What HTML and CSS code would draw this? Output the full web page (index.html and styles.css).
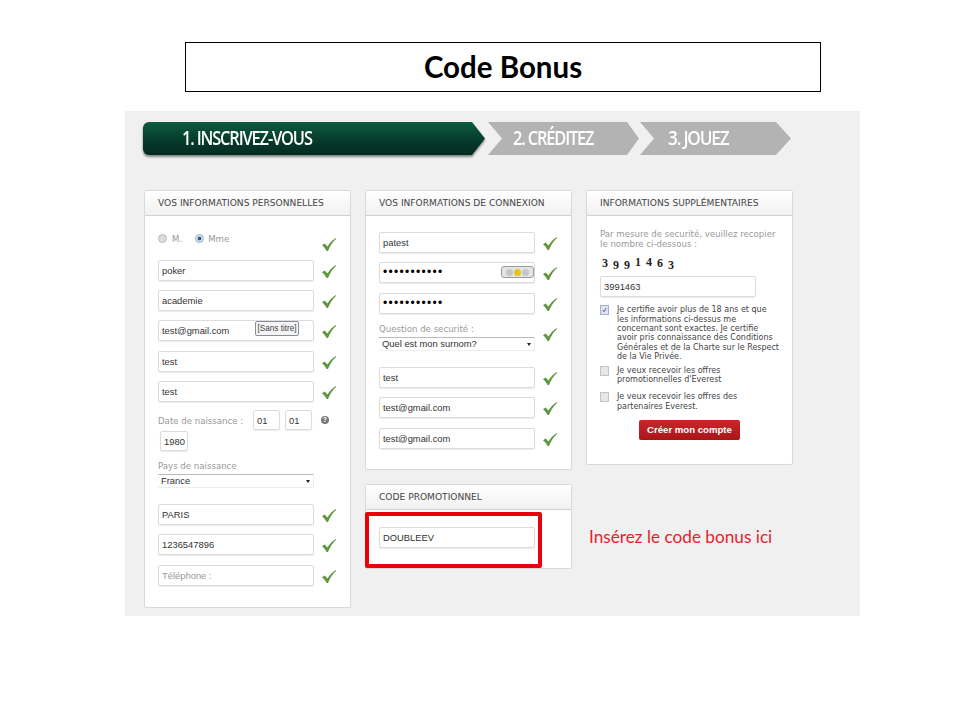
FILE: index.html
```html
<!DOCTYPE html>
<html lang="fr">
<head>
  <meta charset="UTF-8" />
  <title>Code Bonus</title>
  <link rel="stylesheet" href="styles.css">
</head>
<body>
  <svg class="defs" width="0" height="0">
    <symbol id="tick" viewBox="0 0 14 13">
      <path d="M0 7.2 L2.6 5.4 C3.6 6.2 4.6 7.4 5.4 8.6 C7.4 5.2 10.2 2.2 14 0 L14 .9 C10.8 3.8 8.2 7.6 6 13 L4.6 13 C3.6 10.8 2 8.8 0 7.2 Z" fill="#5f9640"/>
    </symbol>
  </svg>

  <h1 class="title">Code Bonus</h1>

  <div class="shot">
    <div class="steps">
      <div class="step-shadow">
        <div class="step step-first"><span>1. INSCRIVEZ-VOUS</span></div>
      </div>
      <div class="step step-second"><span>2. CRÉDITEZ</span></div>
      <div class="step step-third"><span>3. JOUEZ</span></div>
    </div>

    <div class="columns">
      <div class="col">
        <div class="card">
          <div class="card-head">VOS INFORMATIONS PERSONNELLES</div>
          <div class="card-body body-perso">
            <div class="row row-radio">
              <div class="radios">
                <span class="radio"></span><span class="radio-label">M.</span>
                <span class="radio radio-on"></span><span class="radio-label">Mme</span>
              </div>
              <svg class="tick tick-low"><use href="#tick"/></svg>
            </div>
            <div class="row"><div class="field">poker</div><svg class="tick"><use href="#tick"/></svg></div>
            <div class="row"><div class="field">academie</div><svg class="tick"><use href="#tick"/></svg></div>
            <div class="row">
              <div class="field">test@gmail.com<span class="tooltip">[Sans titre]</span></div>
              <svg class="tick"><use href="#tick"/></svg>
            </div>
            <div class="row"><div class="field">test</div><svg class="tick"><use href="#tick"/></svg></div>
            <div class="row"><div class="field">test</div><svg class="tick"><use href="#tick"/></svg></div>

            <div class="date-row">
              <span class="label date-label">Date de naissance :</span>
              <div class="field field-small">01</div>
              <div class="field field-small">01</div>
              <span class="help">?</span>
              <div class="field field-year">1980</div>
            </div>

            <div class="label country-label">Pays de naissance</div>
            <div class="select select-country">France<span class="caret"></span></div>

            <div class="row"><div class="field">PARIS</div><svg class="tick"><use href="#tick"/></svg></div>
            <div class="row"><div class="field">1236547896</div><svg class="tick"><use href="#tick"/></svg></div>
            <div class="row"><div class="field field-empty">Téléphone :</div><svg class="tick"><use href="#tick"/></svg></div>
          </div>
        </div>
      </div>

      <div class="col">
        <div class="card">
          <div class="card-head">VOS INFORMATIONS DE CONNEXION</div>
          <div class="card-body body-login">
            <div class="row"><div class="field">patest</div><svg class="tick"><use href="#tick"/></svg></div>
            <div class="row">
              <div class="field field-pass">•••••••••••
                <span class="meter"><i></i><i class="lit"></i><i></i></span>
              </div>
              <svg class="tick"><use href="#tick"/></svg>
            </div>
            <div class="row"><div class="field field-pass">•••••••••••</div><svg class="tick"><use href="#tick"/></svg></div>
            <div class="row row-question">
              <div>
                <div class="label question-label">Question de securité :</div>
                <div class="select">Quel est mon surnom?<span class="caret"></span></div>
              </div>
              <svg class="tick tick-high"><use href="#tick"/></svg>
            </div>
            <div class="row"><div class="field">test</div><svg class="tick"><use href="#tick"/></svg></div>
            <div class="row"><div class="field">test@gmail.com</div><svg class="tick"><use href="#tick"/></svg></div>
            <div class="row"><div class="field">test@gmail.com</div><svg class="tick"><use href="#tick"/></svg></div>
          </div>
        </div>

        <div class="card card-promo">
          <div class="card-head">CODE PROMOTIONNEL</div>
          <div class="card-body body-promo">
            <div class="row"><div class="field">DOUBLEEV</div></div>
          </div>
          <div class="redbox"></div>
        </div>
      </div>

      <div class="col">
        <div class="card">
          <div class="card-head">INFORMATIONS SUPPLÉMENTAIRES</div>
          <div class="card-body body-extra">
            <p class="label intro">Par mesure de securité, veuillez recopier le nombre ci-dessous :</p>
            <div class="captcha"><span>3</span><span>9</span><span>9</span><span>1</span><span>4</span><span>6</span><span>3</span></div>
            <div class="field">3991463</div>

            <div class="agree agree-first">
              <span class="box box-on"><svg viewBox="0 0 10 10"><path d="M2.5 5 L4.3 7.5 L7.5 2.2" fill="none" stroke="#3b4f8c" stroke-width="1.2"/></svg></span>
              <p>Je certifie avoir plus de 18 ans et que<br>les informations ci-dessus me<br>concernant sont exactes. Je certifie<br>avoir pris connaissance des Conditions<br>Générales et de la Charte sur le Respect<br>de la Vie Privée.</p>
            </div>
            <div class="agree agree-second">
              <span class="box"></span>
              <p>Je veux recevoir les offres<br>promotionnelles d'Everest</p>
            </div>
            <div class="agree">
              <span class="box"></span>
              <p>Je veux recevoir les offres des<br>partenaires Everest.</p>
            </div>
            <div class="button">Créer mon compte</div>
          </div>
        </div>
        <p class="note">Insérez le code bonus ici</p>
      </div>
    </div>
  </div>
</body>
</html>
```

FILE: styles.css
```css
* {
  margin: 0;
  padding: 0;
  box-sizing: border-box;
}

body {
  background: #fff;
  font-family: 'Liberation Sans', Arial, sans-serif;
  color: #333;
  padding-top: 42px;
}

.defs {
  display: block;
  height: 0;
}

/* Titre */
.title {
  width: 636px;
  height: 50px;
  margin: 0 0 19px 185px;
  border: 1px solid #000;
  font-family: Lato, sans-serif;
  font-size: 29.5px;
  font-weight: 700;
  line-height: 48px;
  text-align: center;
  color: #000;
}

/* Capture */
.shot {
  width: 735px;
  height: 505px;
  margin-left: 125px;
  padding: 11px 0 0 18px;
  background: #f0f0f0;
}

.steps {
  display: flex;
  height: 34px;
  margin-bottom: 34px;
}

.step {
  height: 33px;
  font-family: 'Open Sans', sans-serif;
  font-size: 20px;
  font-weight: 600;
  letter-spacing: -1.4px;
  line-height: 32px;
  color: #fff;
  background: #b3b3b3;
}

/* police condensee de la capture */
.step span {
  display: inline-block;
  transform: scaleX(0.82);
  transform-origin: left center;
}

.step-third span {
  transform: scaleX(0.86);
}

.step-shadow {
  filter: drop-shadow(0 2px 1px rgba(0, 0, 0, 0.45));
  margin-right: 3px;
}

.step-first {
  width: 342px;
  height: 33px;
  padding-left: 39px;
  border-radius: 6px 0 0 6px;
  background: linear-gradient(#0c5c3f, #06392a 60%, #042c20);
  clip-path: polygon(0 0, 329px 0, 342px 50%, 329px 100%, 0 100%);
}

.step-second {
  width: 151px;
  margin-right: 1px;
  padding-left: 25px;
  clip-path: polygon(0 0, 139px 0, 151px 50%, 139px 100%, 0 100%, 14px 50%);
}

.step-third {
  width: 151px;
  padding-left: 28px;
  clip-path: polygon(0 0, 136px 0, 151px 50%, 136px 100%, 0 100%, 14px 50%);
}

.columns {
  display: flex;
  gap: 14px;
  margin-left: 1px;
}

.col {
  width: 207px;
}

/* Cartes */
.card {
  position: relative;
  background: #fff;
  border: 1px solid #d9d9d9;
  border-radius: 2px;
}

.card-promo {
  margin-top: 14px;
}

.card-head {
  height: 25px;
  padding-left: 13px;
  border-bottom: 1px solid #d0d0d0;
  background: linear-gradient(#fff, #f1f1f1);
  font-family: 'DejaVu Sans', Verdana, sans-serif;
  font-size: 9.1px;
  line-height: 24px;
  color: #444;
}

.card-body {
  padding: 16px 13px 12px;
}

.body-perso {
  padding-top: 18px;
}

.body-login {
  padding-bottom: 11px;
}

.body-promo {
  padding-top: 17px;
  padding-bottom: 11px;
}

.body-extra {
  padding-top: 14px;
  padding-bottom: 24px;
}

/* Lignes */
.row {
  display: flex;
  align-items: center;
  gap: 8px;
  height: 21px;
  margin-bottom: 9.4px;
}

.row-radio {
  align-items: flex-start;
  height: 20px;
  margin-bottom: 5.6px;
}

.row-question {
  height: 28px;
  margin-top: -0.4px;
  margin-bottom: 16px;
}

.field {
  position: relative;
  width: 156px;
  height: 21px;
  padding-left: 3px;
  background: #fff;
  border: 1px solid #dcdcdc;
  border-radius: 2px;
  box-shadow: 0 1px 1px #ececec;
  font-size: 9.4px;
  line-height: 19px;
  color: #333;
}

.field-small {
  width: 27px;
  height: 20px;
}

.field-year {
  width: 28px;
  height: 20px;
  margin-left: 2px;
}

.field-empty {
  color: #999;
}

.field-pass {
  font-size: 12px;
  letter-spacing: 1.3px;
  color: #000;
}

.tick {
  flex: none;
  width: 14px;
  height: 13px;
  margin-top: 2px;
}

.tick-low {
  margin-top: 4px;
}

.tick-high {
  margin-top: 0;
  margin-bottom: 4px;
}

.label {
  font-family: 'DejaVu Sans', Verdana, sans-serif;
  font-size: 8.6px;
  color: #999;
}

.radios {
  display: flex;
  align-items: center;
  width: 156px;
  height: 9px;
}

.radio {
  width: 9px;
  height: 9px;
  border: 1px solid #bbb;
  border-radius: 50%;
  background: #ddd;
}

.radio-on {
  margin-left: 13px;
  border-color: #9fb4c9;
  background: radial-gradient(circle, #2d5f80 30%, #cfdce8 45%);
}

.radio-label {
  margin-left: 5px;
  font-family: 'DejaVu Sans', Verdana, sans-serif;
  font-size: 8.6px;
  color: #999;
}

.radio-on + .radio-label {
  margin-left: 4px;
}

.date-row {
  display: flex;
  flex-wrap: wrap;
  align-items: center;
  column-gap: 5px;
  row-gap: 1px;
  width: 180px;
  margin-top: -1.6px;
}

.date-label {
  width: 90px;
  padding-top: 2px;
}

.help {
  width: 8px;
  height: 8px;
  margin-left: 4px;
  border-radius: 50%;
  background: #777;
  font-size: 7px;
  font-weight: 700;
  line-height: 8px;
  text-align: center;
  color: #fff;
}

.country-label {
  height: 12px;
  margin-top: 9px;
  margin-bottom: 2px;
  line-height: 12px;
}

.select {
  position: relative;
  width: 156px;
  height: 14px;
  padding-left: 3px;
  background: #fff;
  border-top: 1px solid #bbb;
  border-right: 1px solid #eee;
  border-bottom: 1px solid #eee;
  font-size: 9.4px;
  line-height: 12px;
  color: #333;
}

.select-country {
  margin-bottom: 16px;
}

.caret {
  position: absolute;
  top: 5px;
  right: 3px;
  border-top: 3px solid #222;
  border-left: 2.5px solid transparent;
  border-right: 2.5px solid transparent;
}

.question-label {
  height: 12px;
  margin-bottom: 2px;
  line-height: 12px;
}

/* Par dessus les champs */
.tooltip {
  position: absolute;
  top: 0;
  left: 96px;
  width: 44px;
  height: 15px;
  background: #f4f4f6;
  border: 1px solid #8a8d99;
  border-radius: 2px;
  font-size: 8.2px;
  line-height: 13px;
  text-align: center;
  color: #444;
}

.meter {
  position: absolute;
  top: 3px;
  right: 0;
  display: flex;
  align-items: center;
  justify-content: center;
  gap: 1px;
  width: 33px;
  height: 12px;
  background: #e4e4e4;
  border: 1px solid #9a9a9a;
  border-radius: 3px;
}

.meter i {
  width: 7px;
  height: 7px;
  border-radius: 50%;
  background: #c6c6c6;
}

.meter .lit {
  background: #e3c321;
}

.redbox {
  position: absolute;
  top: 27px;
  left: -1px;
  width: 177px;
  height: 56px;
  border: 4px solid #e8000d;
  border-radius: 2px;
}

/* Colonne de droite */
.intro {
  width: 180px;
  line-height: 9.6px;
  margin-bottom: 6px;
}

.captcha {
  display: flex;
  height: 16px;
  margin-bottom: 5px;
  padding-left: 2px;
  font-family: 'Liberation Serif', serif;
  font-size: 12px;
  font-weight: 700;
  line-height: 16px;
  color: #222;
}

.captcha span {
  width: 11px;
}

.captcha span:nth-child(2),
.captcha span:nth-child(3),
.captcha span:nth-child(7) {
  line-height: 20px;
}

.captcha span:nth-child(4),
.captcha span:nth-child(5) {
  line-height: 14px;
}

.agree {
  display: flex;
  gap: 8px;
  margin-top: 8px;
  font-family: 'DejaVu Sans', Verdana, sans-serif;
  font-size: 8px;
  line-height: 9.4px;
  color: #444;
}

.agree-first {
  margin-top: 8px;
}

.agree-second {
  margin-top: 4px;
}

.agree p {
  flex: none;
  width: 165px;
}

.box {
  flex: none;
  width: 9px;
  height: 10px;
  margin-top: 0;
  background: #e6e6e6;
  border: 1px solid #c4c4c4;
}

.box-on {
  background: #dfe3f3;
  border-color: #a8afcc;
}

.box svg {
  display: block;
  width: 100%;
  height: 100%;
}

.button {
  width: 101px;
  height: 20px;
  margin: 9px 0 0 39px;
  background: linear-gradient(#c8272a, #ab1518);
  border-radius: 2px;
  font-size: 9.6px;
  font-weight: 700;
  line-height: 20px;
  text-align: center;
  color: #fff;
}

.note {
  margin-top: 62px;
  margin-left: 3px;
  font-family: Lato, sans-serif;
  font-size: 17.2px;
  line-height: 20px;
  color: #e81d2d;
}
```
